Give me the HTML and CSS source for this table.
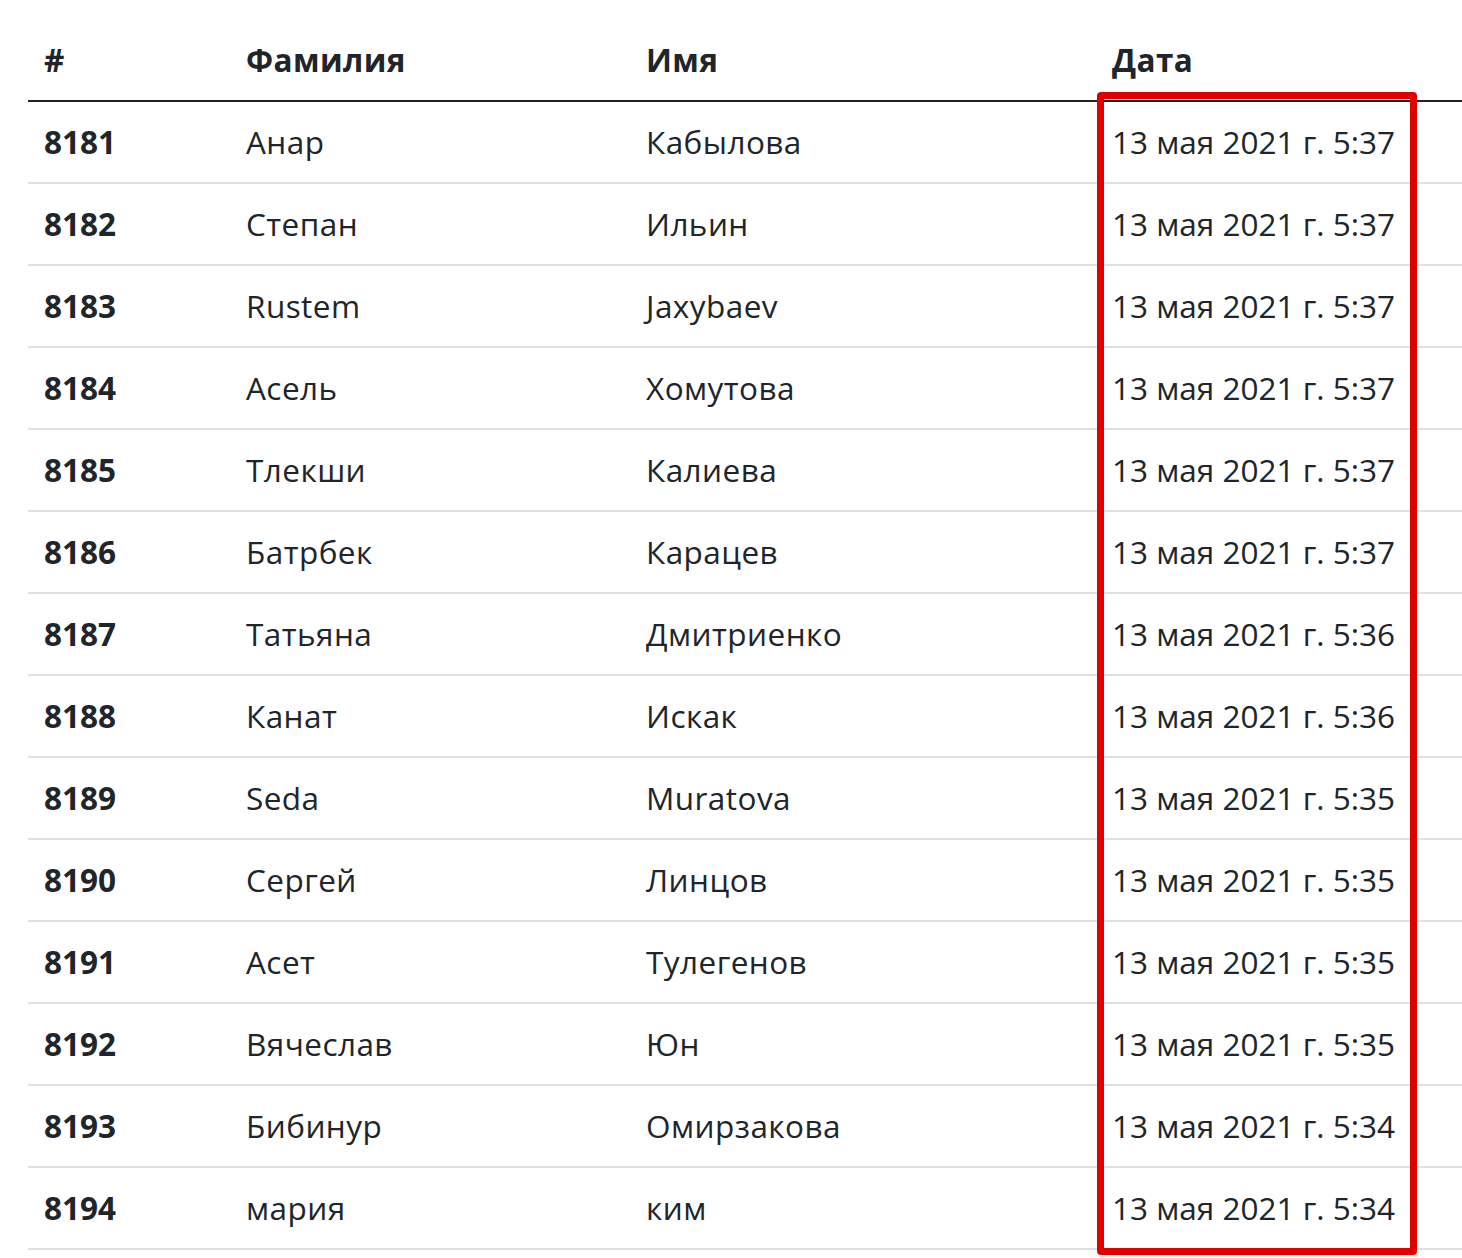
FILE: index.html
```
<!DOCTYPE html>
<html lang="ru">
<head>
<meta charset="utf-8">
<title>Таблица</title>
<link rel="stylesheet" href="styles.css">
</head>
<body>
<div class="wrap">
<table class="tbl">
<colgroup>
<col class="c-num"><col class="c-last"><col class="c-first"><col class="c-date">
</colgroup>
<thead>
<tr><th>#</th><th class="head">Фамилия</th><th class="head">Имя</th><th class="head">Дата</th></tr>
</thead>
<tbody>
<tr><th>8181</th><td class="name">Анар</td><td class="name">Кабылова</td><td>13 мая 2021 г. 5:37</td></tr>
<tr><th>8182</th><td class="name">Степан</td><td class="name">Ильин</td><td>13 мая 2021 г. 5:37</td></tr>
<tr><th>8183</th><td class="name">Rustem</td><td class="name">Jaxybaev</td><td>13 мая 2021 г. 5:37</td></tr>
<tr><th>8184</th><td class="name">Асель</td><td class="name">Хомутова</td><td>13 мая 2021 г. 5:37</td></tr>
<tr><th>8185</th><td class="name">Тлекши</td><td class="name">Калиева</td><td>13 мая 2021 г. 5:37</td></tr>
<tr><th>8186</th><td class="name">Батрбек</td><td class="name">Карацев</td><td>13 мая 2021 г. 5:37</td></tr>
<tr><th>8187</th><td class="name">Татьяна</td><td class="name">Дмитриенко</td><td>13 мая 2021 г. 5:36</td></tr>
<tr><th>8188</th><td class="name">Канат</td><td class="name">Искак</td><td>13 мая 2021 г. 5:36</td></tr>
<tr><th>8189</th><td class="name">Seda</td><td class="name">Muratova</td><td>13 мая 2021 г. 5:35</td></tr>
<tr><th>8190</th><td class="name">Сергей</td><td class="name">Линцов</td><td>13 мая 2021 г. 5:35</td></tr>
<tr><th>8191</th><td class="name">Асет</td><td class="name">Тулегенов</td><td>13 мая 2021 г. 5:35</td></tr>
<tr><th>8192</th><td class="name">Вячеслав</td><td class="name">Юн</td><td>13 мая 2021 г. 5:35</td></tr>
<tr><th>8193</th><td class="name">Бибинур</td><td class="name">Омирзакова</td><td>13 мая 2021 г. 5:34</td></tr>
<tr><th>8194</th><td class="name">мария</td><td class="name">ким</td><td>13 мая 2021 г. 5:34</td></tr>
</tbody>
</table>
<div class="highlight"></div>
</div>
</body>
</html>
```
FILE: styles.css
```
html, body {
  margin: 0;
  padding: 0;
  background: #fff;
}
body {
  font-family: "Open Sans", "Liberation Sans", sans-serif;
  color: #212529;
  font-size: 31.5px;
  line-height: 48px;
}
.wrap {
  position: relative;
  padding: 20px 0 10px 28px;
}
.tbl {
  width: 1434px;
  border-collapse: collapse;
  table-layout: fixed;
}
.c-num { width: 202px; }
.c-last { width: 400px; }
.c-first { width: 466px; }
.c-date { width: auto; }
.tbl th, .tbl td {
  padding: 16px 16px;
  text-align: left;
  vertical-align: top;
  white-space: nowrap;
}
.tbl th { font-weight: 700; }
.tbl td { font-weight: 400; }
.tbl td.name { letter-spacing: 0.45px; }
.tbl th.head { letter-spacing: 0.4px; }
.tbl thead th {
  border-bottom: 2px solid #212529;
}
.tbl tbody th, .tbl tbody td {
  border-bottom: 2px solid #dee2e6;
}
.highlight {
  position: absolute;
  left: 1097px;
  top: 92px;
  width: 320px;
  height: 1163px;
  box-sizing: border-box;
  border: 7px solid #e00000;
  border-radius: 4px;
  pointer-events: none;
}
```
